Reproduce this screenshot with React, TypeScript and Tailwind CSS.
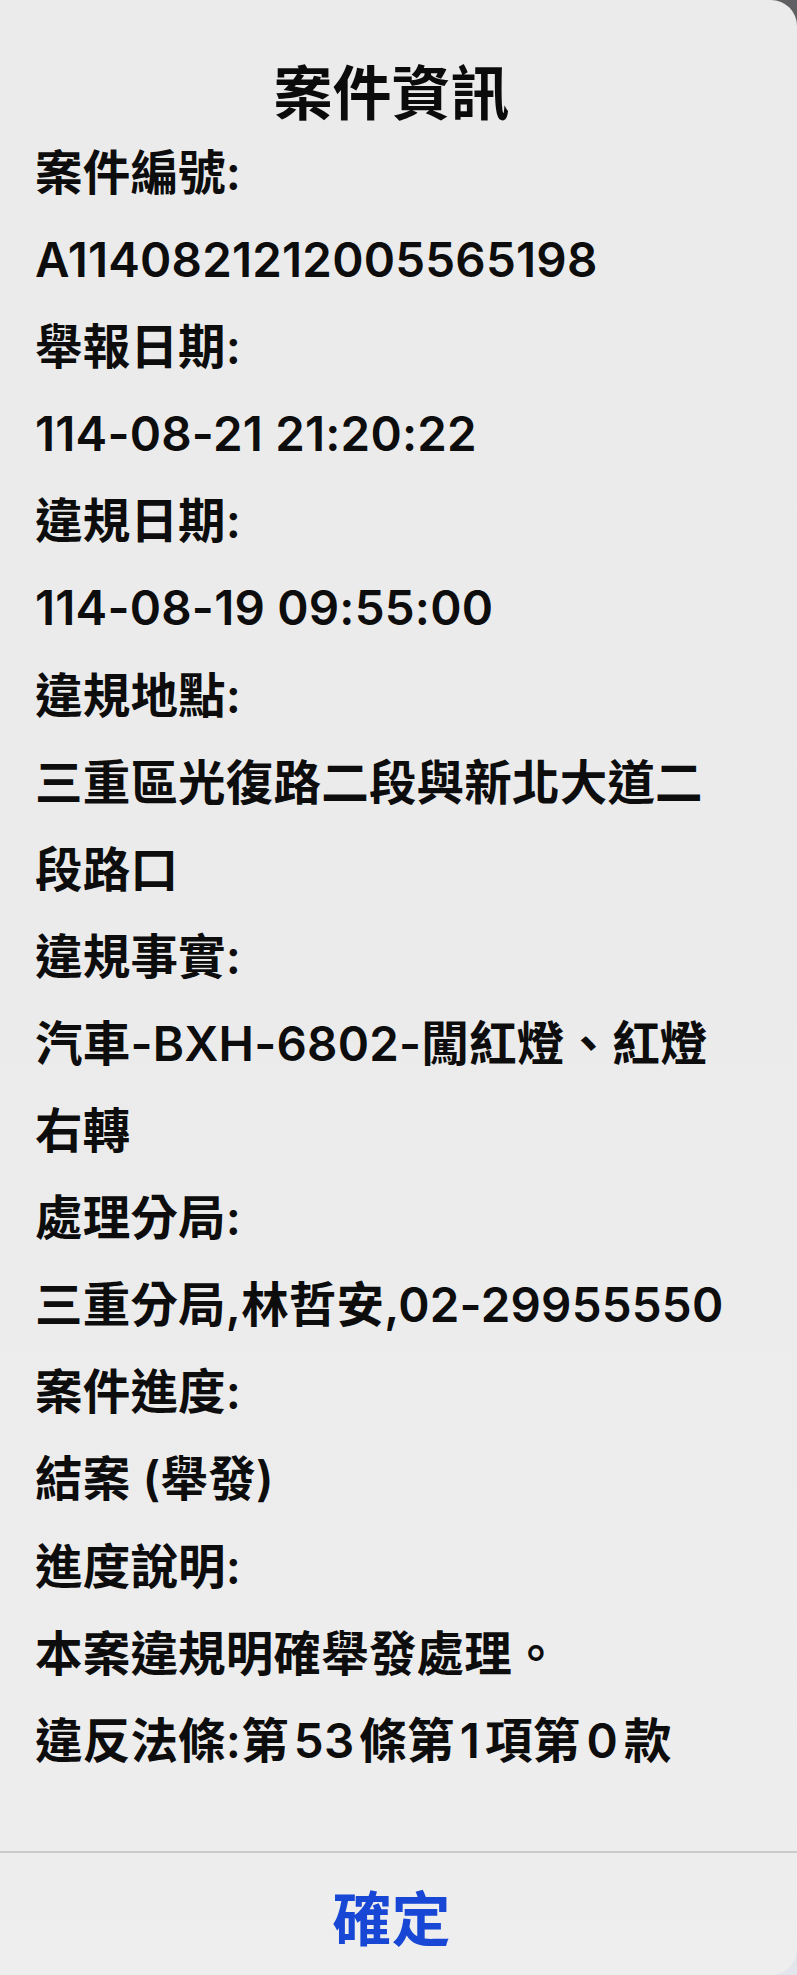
import React from 'react';

const FONT = '"Inter", "Noto Sans CJK TC", "Noto Sans", sans-serif';

// label / value rows of the case dialog; an array value is one paragraph
// that wraps onto a second line in the original
const rows: (string | string[])[] = [
  '案件編號:',
  'A114082121200556519 8'.replace(' ', ''),
  '舉報日期:',
  '114-08-21 21:20:22',
  '違規日期:',
  '114-08-19 09:55:00',
  '違規地點:',
  ['三重區光復路二段與新北大道二', '段路口'],
  '違規事實:',
  ['汽車-BXH-6802-闖紅燈、紅燈', '右轉'],
  '處理分局:',
  '三重分局,林哲安,02-29955550',
  '案件進度:',
  '結案 (舉發)',
  '進度說明:',
  '本案違規明確舉發處理。',
];

export default function App() {
  return (
    <div
      className="w-[797px] h-[1975px] overflow-hidden bg-gradient-to-b from-[#5f5f61] via-[#b9b9bb] to-[#e4e6ee]"
      style={{ fontFamily: FONT }}
    >
      <div className="relative flex h-full w-full flex-col rounded-tr-[26px] rounded-br-[26px] bg-gradient-to-b from-[#ebebeb] via-[#ebebec] to-[#eeeeef]">
        {/* title */}
        <div className="pt-[59px] pr-[14px] text-center">
          <h1 className="text-[59px] font-bold leading-[70px] text-[#0b0b0b]">案件資訊</h1>
        </div>

        {/* message body */}
        <div className="pl-[35px] pr-[40px] text-[47.5px] font-semibold leading-[87.1px] tracking-[0.2px] text-[#0d0d0d] whitespace-nowrap">
          {rows.map((r, i) =>
            Array.isArray(r) ? (
              <p key={i}>
                {r[0]}
                <br />
                {r[1]}
              </p>
            ) : (
              <p key={i}>{r}</p>
            )
          )}
          <p>
            違反法條:第<span className="mx-[5px]">53</span>條第<span className="mx-[5px]">1</span>項第
            <span className="mx-[6px]">0</span>款
          </p>
        </div>

        <div className="flex-1" />

        {/* action */}
        <div className="h-[2px] w-full bg-[#cbcbcd]" />
        <div className="flex h-[122px] items-start justify-center pt-[32px] pr-[14px]">
          <button className="text-[59px] font-bold leading-[70px] text-[#1747d4]">確定</button>
        </div>
      </div>
    </div>
  );
}
